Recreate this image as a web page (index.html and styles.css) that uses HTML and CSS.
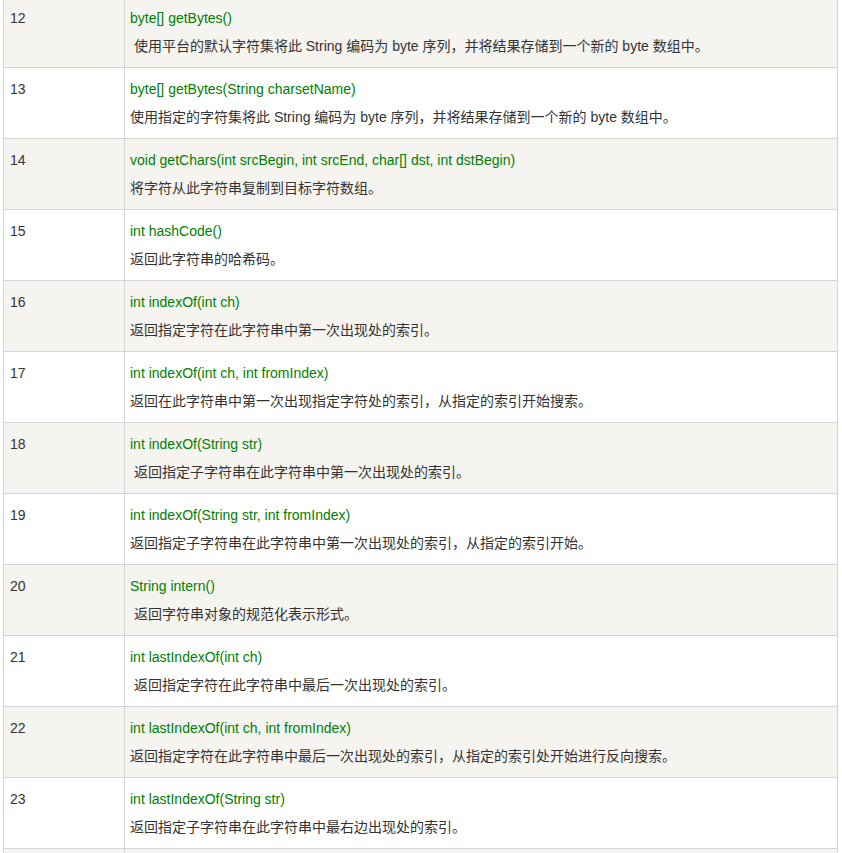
FILE: index.html
```html
<!DOCTYPE html>
<html lang="zh-CN">
<head>
<meta charset="utf-8">
<title>String 方法</title>
<link rel="stylesheet" href="styles.css">
</head>
<body>
<table class="ref">
<tbody>
<tr><td class="num">12</td><td class="desc"><div class="sig">byte[] getBytes()</div><div>&nbsp;使用平台的默认字符集将此 String 编码为 byte 序列，并将结果存储到一个新的 byte 数组中。</div></td></tr>
<tr><td class="num">13</td><td class="desc"><div class="sig">byte[] getBytes(String charsetName)</div><div>使用指定的字符集将此 String 编码为 byte 序列，并将结果存储到一个新的 byte 数组中。</div></td></tr>
<tr><td class="num">14</td><td class="desc"><div class="sig">void getChars(int srcBegin, int srcEnd, char[] dst, int dstBegin)</div><div>将字符从此字符串复制到目标字符数组。</div></td></tr>
<tr><td class="num">15</td><td class="desc"><div class="sig">int hashCode()</div><div>返回此字符串的哈希码。</div></td></tr>
<tr><td class="num">16</td><td class="desc"><div class="sig">int indexOf(int ch)</div><div>返回指定字符在此字符串中第一次出现处的索引。</div></td></tr>
<tr><td class="num">17</td><td class="desc"><div class="sig">int indexOf(int ch, int fromIndex)</div><div>返回在此字符串中第一次出现指定字符处的索引，从指定的索引开始搜索。</div></td></tr>
<tr><td class="num">18</td><td class="desc"><div class="sig">int indexOf(String str)</div><div>&nbsp;返回指定子字符串在此字符串中第一次出现处的索引。</div></td></tr>
<tr><td class="num">19</td><td class="desc"><div class="sig">int indexOf(String str, int fromIndex)</div><div>返回指定子字符串在此字符串中第一次出现处的索引，从指定的索引开始。</div></td></tr>
<tr><td class="num">20</td><td class="desc"><div class="sig">String intern()</div><div>&nbsp;返回字符串对象的规范化表示形式。</div></td></tr>
<tr><td class="num">21</td><td class="desc"><div class="sig">int lastIndexOf(int ch)</div><div>&nbsp;返回指定字符在此字符串中最后一次出现处的索引。</div></td></tr>
<tr><td class="num">22</td><td class="desc"><div class="sig">int lastIndexOf(int ch, int fromIndex)</div><div>返回指定字符在此字符串中最后一次出现处的索引，从指定的索引处开始进行反向搜索。</div></td></tr>
<tr><td class="num">23</td><td class="desc"><div class="sig">int lastIndexOf(String str)</div><div>返回指定子字符串在此字符串中最右边出现处的索引。</div></td></tr>
<tr class="tail"><td class="num"></td><td class="desc"></td></tr>
</tbody>
</table>
</body>
</html>
```
FILE: styles.css
```css
html, body {
  margin: 0;
  padding: 0;
  background: #ffffff;
}

body {
  font-family: "Liberation Sans", Arial, "Noto Sans CJK SC", sans-serif;
  font-size: 14px;
  color: #333333;
}

.ref {
  border-collapse: collapse;
  width: 835px;
  margin: -4px 0 0 3px;
  table-layout: fixed;
}

.ref tr:nth-child(odd) {
  background: #f6f4f0;
}

.ref tr:nth-child(even) {
  background: #ffffff;
}

.ref td {
  border: 1px solid #d4d4d4;
  padding: 7px 6px;
  line-height: 28px;
  vertical-align: top;
  text-align: left;
  white-space: nowrap;
}

.ref td.num {
  width: 108px;
}

.ref td.desc {
  padding-left: 5px;
}

.ref tr.tail td {
  height: 56px;
}

.sig {
  color: #008000;
}
```
